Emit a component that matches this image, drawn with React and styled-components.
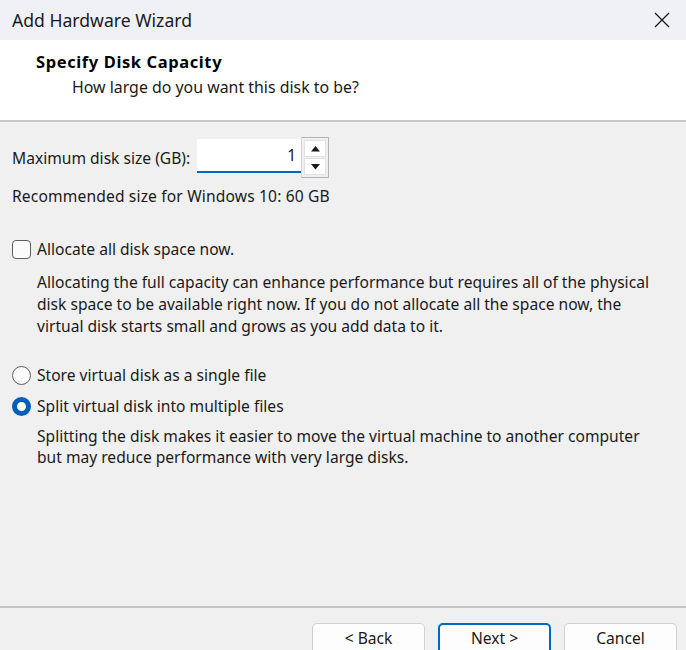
import React from 'react';
import styled, { createGlobalStyle } from 'styled-components';

const GlobalStyle = createGlobalStyle`
  html, body {
    margin: 0;
    padding: 0;
    background: #f0f0f0;
  }
  body {
    font-family: "Noto Sans", "Open Sans", sans-serif;
    color: #1a1a1a;
  }
`;

const Window = styled.div`
  width: 686px;
  height: 650px;
  display: flex;
  flex-direction: column;
  overflow: hidden;
  background: #f0f0f0;
`;

const TitleBar = styled.div`
  height: 40px;
  flex: none;
  display: flex;
  align-items: center;
  justify-content: space-between;
  padding: 0 12px;
  background: #eff1f7;
  font-size: 17.6px;
  color: #1a1a1a;
`;

const CloseBtn = styled.div`
  width: 20px;
  height: 20px;
  display: flex;
  align-items: center;
  justify-content: center;
  margin-right: 2px;
`;

const Header = styled.div`
  height: 82px;
  flex: none;
  background: #ffffff;
  border-bottom: 2px solid #c8c8c8;
  box-sizing: border-box;
  padding: 11px 0 0 36px;
`;

const HeaderTitle = styled.div`
  font-weight: 700;
  font-size: 16.5px;
  letter-spacing: 0.6px;
  line-height: 22px;
  color: #000;
`;

const HeaderSub = styled.div`
  font-size: 15.9px;
  line-height: 22px;
  margin: 3px 0 0 36px;
  color: #1a1a1a;
`;

const Body = styled.div`
  flex: 1;
  display: flex;
  flex-direction: column;
  padding: 15px 12px 0 12px;
  font-size: 15.6px;
`;

const SpinRow = styled.div`
  display: flex;
  align-items: center;
  height: 41px;
  gap: 7px;
`;

const SpinBox = styled.div`
  display: flex;
  align-items: stretch;
  height: 41px;
`;

const SpinInput = styled.div`
  width: 104px;
  margin-top: 2px;
  height: 34px;
  box-sizing: border-box;
  background: #ffffff;
  border-bottom: 2px solid #0067c0;
  display: flex;
  align-items: center;
  justify-content: flex-end;
  padding-right: 5px;
  font-size: 15.6px;
`;

const SpinButtons = styled.div`
  width: 28px;
  box-sizing: border-box;
  border: 1px solid #b4b4b4;
  border-left: 1px solid #d4d4d4;
  background: #f0f0f0;
  padding: 2px;
  display: flex;
  flex-direction: column;
  gap: 1px;
`;

const SpinArrow = styled.div`
  flex: 1;
  background: #ffffff;
  border: 1px solid #e2e2e2;
  display: flex;
  align-items: center;
  justify-content: center;
`;

const Line = styled.div`
  line-height: 22px;
  letter-spacing: 0.15px;
  margin-top: ${(p) => p.$mt || 0}px;
`;

const OptionRow = styled.label`
  display: flex;
  align-items: center;
  gap: 6px;
  height: 22px;
  line-height: 22px;
  margin-top: ${(p) => p.$mt || 0}px;
`;

const CheckBox = styled.span`
  width: 19px;
  height: 19px;
  box-sizing: border-box;
  border: 1px solid #5d5d5d;
  border-radius: 4px;
  background: #fbfbfb;
  flex: none;
`;

const Radio = styled.span`
  width: 19px;
  height: 19px;
  box-sizing: border-box;
  border-radius: 50%;
  flex: none;
  border: ${(p) => (p.$checked ? '5px solid #005fb8' : '1px solid #5d5d5d')};
  background: ${(p) => (p.$checked ? '#ffffff' : '#fbfbfb')};
`;

const Desc = styled.div`
  margin: ${(p) => p.$mt || 0}px 0 0 25px;
  line-height: ${(p) => p.$lh || 22}px;
  white-space: nowrap;
`;

const Footer = styled.div`
  flex: none;
  height: 44px;
  border-top: 2px solid #c4c4c4;
  box-sizing: border-box;
  display: flex;
  justify-content: flex-end;
  align-items: flex-start;
  gap: 13px;
  padding: 15px 9px 0 0;
`;

const Button = styled.div`
  width: 113px;
  height: 32px;
  flex: none;
  box-sizing: border-box;
  border: ${(p) => (p.$primary ? '2px solid #0067c0' : '1px solid #d0d0d0')};
  border-radius: 5px;
  background: #fdfdfd;
  display: flex;
  align-items: flex-start;
  justify-content: center;
  padding-top: ${(p) => (p.$primary ? 2 : 3)}px;
  font-size: 15.6px;
  color: #1a1a1a;
`;

const Triangle = ({ down }) => (
  <svg width="9" height="6" viewBox="0 0 9 6">
    <path d={down ? 'M0 0 L9 0 L4.5 5.5 Z' : 'M0 5.5 L9 5.5 L4.5 0 Z'} fill="#1a1a1a" />
  </svg>
);

export default function App() {
  return (
    <Window>
      <GlobalStyle />
      <TitleBar>
        <span>Add Hardware Wizard</span>
        <CloseBtn>
          <svg width="16" height="16" viewBox="0 0 16 16">
            <path d="M1 1 L15 15 M15 1 L1 15" stroke="#1a1a1a" strokeWidth="1.3" />
          </svg>
        </CloseBtn>
      </TitleBar>

      <Header>
        <HeaderTitle>Specify Disk Capacity</HeaderTitle>
        <HeaderSub>How large do you want this disk to be?</HeaderSub>
      </Header>

      <Body>
        <SpinRow>
          <span>Maximum disk size (GB):</span>
          <SpinBox>
            <SpinInput>1</SpinInput>
            <SpinButtons>
              <SpinArrow><Triangle /></SpinArrow>
              <SpinArrow><Triangle down /></SpinArrow>
            </SpinButtons>
          </SpinBox>
        </SpinRow>
        <Line $mt={7}>Recommended size for Windows 10: 60 GB</Line>

        <OptionRow $mt={31}>
          <CheckBox />
          <span>Allocate all disk space now.</span>
        </OptionRow>
        <Desc $mt={11}>
          Allocating the full capacity can enhance performance but requires all of the physical
          <br />
          disk space to be available right now. If you do not allocate all the space now, the
          <br />
          virtual disk starts small and grows as you add data to it.
        </Desc>

        <OptionRow $mt={27}>
          <Radio />
          <span>Store virtual disk as a single file</span>
        </OptionRow>
        <OptionRow $mt={9}>
          <Radio $checked />
          <span>Split virtual disk into multiple files</span>
        </OptionRow>
        <Desc $mt={9} $lh={21}>
          Splitting the disk makes it easier to move the virtual machine to another computer
          <br />
          but may reduce performance with very large disks.
        </Desc>
      </Body>

      <Footer>
        <Button>&lt; Back</Button>
        <Button $primary>Next &gt;</Button>
        <Button>Cancel</Button>
      </Footer>
    </Window>
  );
}
